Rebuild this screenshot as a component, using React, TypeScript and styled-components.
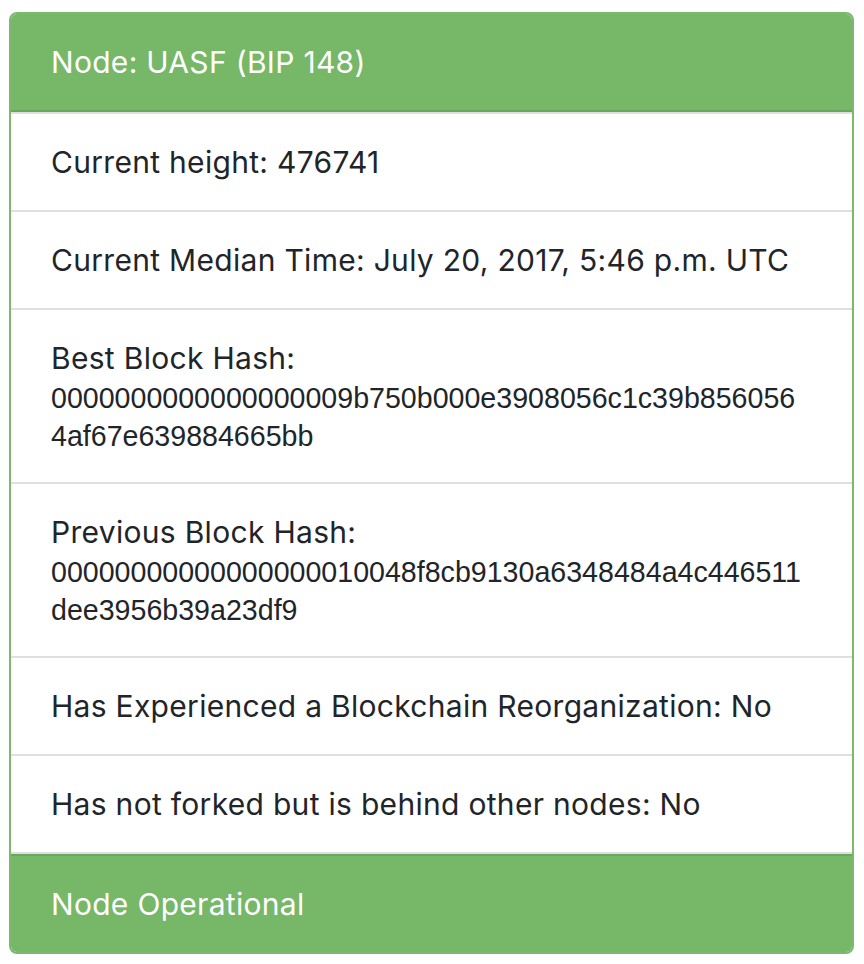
import * as React from 'react';
import styled, { createGlobalStyle } from 'styled-components';

const GlobalStyle = createGlobalStyle`
  body {
    margin: 0;
    background: #ffffff;
    font-family: Inter, "Helvetica Neue", Arial, sans-serif;
    color: #212529;
  }
`;

const Page = styled.div`
  padding: 12px 10px 11px 9px;
`;

const Card = styled.div`
  border: 2px solid #7cb96f;
  border-radius: 8px;
  overflow: hidden;
  background: #ffffff;
`;

const Bar = styled.div<{ $bottom?: boolean }>`
  background: #76b768;
  color: #ffffff;
  font-size: 30px;
  letter-spacing: 0.3px;
  line-height: 42px;
  padding: 27px 40px 27px;
  ${p => (p.$bottom ? 'border-top: 2px solid #68a85c;' : 'border-bottom: 2px solid #68a85c;')}
`;

const List = styled.ul`
  list-style: none;
  margin: 0;
  padding: 0;
`;

const Item = styled.li`
  font-size: 30px;
  letter-spacing: 0.3px;
  line-height: 42px;
  padding: 27px 40px;
  border-top: 2px solid #dfdfdf;
  &:last-child {
    border-bottom: 2px solid #dfdfdf;
  }
`;

const Hash = styled.div`
  font-family: "Liberation Sans", Arial, sans-serif;
  font-size: 28.6px;
  letter-spacing: 0;
  line-height: 38px;
  word-break: break-all;
`;

const rows: { label: string; value?: string; hash?: string[] }[] = [
  { label: 'Current height:', value: '476741' },
  { label: 'Current Median Time:', value: 'July 20, 2017, 5:46 p.m. UTC' },
  {
    label: 'Best Block Hash:',
    hash: ['0000000000000000009b750b000e3908056c1c39b856056', '4af67e639884665bb']
  },
  {
    label: 'Previous Block Hash:',
    hash: ['00000000000000000010048f8cb9130a6348484a4c446511', 'dee3956b39a23df9']
  },
  { label: 'Has Experienced a Blockchain Reorganization:', value: 'No' },
  { label: 'Has not forked but is behind other nodes:', value: 'No' }
];

export default function App() {
  return (
    <Page>
      <GlobalStyle />
      <Card>
        <Bar>Node: UASF (BIP 148)</Bar>
        <List>
          {rows.map(r => (
            <Item key={r.label}>
              {r.hash ? (
                <>
                  <div>{r.label}</div>
                  {r.hash.map(h => (
                    <Hash key={h}>{h}</Hash>
                  ))}
                </>
              ) : (
                `${r.label} ${r.value}`
              )}
            </Item>
          ))}
        </List>
        <Bar $bottom>Node Operational</Bar>
      </Card>
    </Page>
  );
}
